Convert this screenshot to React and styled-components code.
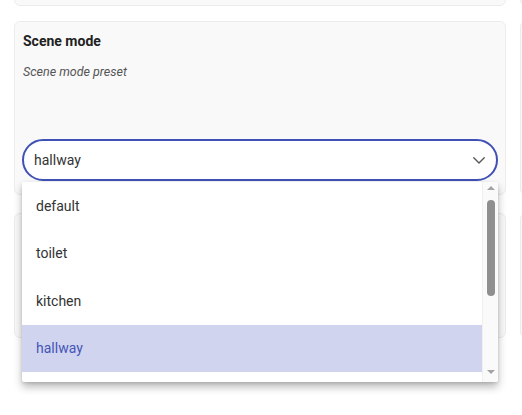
import React, { useState } from 'react';
import styled, { createGlobalStyle } from 'styled-components';

const GlobalStyle = createGlobalStyle`
  html, body {
    margin: 0;
    padding: 0;
    background: #ffffff;
    overflow: hidden;
  }
  body {
    font-family: Roboto, 'Liberation Sans', Arial, sans-serif;
  }
`;

const Viewport = styled.div`
  width: 522px;
  height: 415px;
  overflow: hidden;
`;

const Page = styled.div`
  display: grid;
  grid-template-columns: 492px 492px;
  column-gap: 14px;
  padding-left: 14px;
  margin-top: -30px;
`;

const Column = styled.div`
  display: flex;
  flex-direction: column;
`;

const Card = styled.div`
  box-sizing: border-box;
  height: ${props => props.h}px;
  margin-bottom: ${props => props.gap || 0}px;
  background: #f9f9f9;
  border: 1px solid #ececec;
  border-radius: 6px;
  padding: 9px 8px 0 8px;
  position: relative;
`;

const Title = styled.h3`
  margin: 0;
  font-size: 14px;
  line-height: 20px;
  font-weight: 700;
  color: #222;
`;

const Subtitle = styled.div`
  margin: 13px 0 0 0;
  font-size: 12.5px;
  line-height: 16px;
  font-style: italic;
  color: #555;
`;

const SelectWrap = styled.div`
  position: relative;
  margin-top: 59px;
`;

const SelectBox = styled.div`
  box-sizing: border-box;
  height: 42px;
  width: 476px;
  margin-left: -1px;
  border: 2px solid #3f51b5;
  border-radius: 21px;
  background: #fff;
  display: flex;
  align-items: center;
  justify-content: space-between;
  padding: 0 8px 0 10px;
  font-size: 14px;
  color: #333;
  cursor: pointer;
`;

const Menu = styled.div`
  position: absolute;
  top: 43px;
  left: -1px;
  width: 476px;
  height: 200px;
  background: #fff;
  box-shadow: 0 5px 9px rgba(0, 0, 0, 0.28), 0 1px 3px rgba(0, 0, 0, 0.12);
  border-radius: 2px;
  display: flex;
  overflow: hidden;
  z-index: 10;
`;

const List = styled.ul`
  list-style: none;
  margin: 0;
  padding: 0;
  flex: 1;
`;

const Item = styled.li`
  height: 47.5px;
  display: flex;
  align-items: center;
  padding-left: 14px;
  font-size: 14px;
  color: ${props => (props.selected ? '#4555b8' : '#333')};
  background: ${props => (props.selected ? '#d0d4ee' : '#fff')};
`;

const Scrollbar = styled.div`
  width: 15px;
  background: #fafafa;
  border-left: 1px solid #f0f0f0;
  display: flex;
  flex-direction: column;
  align-items: center;
`;

const Arrow = styled.div`
  width: 0;
  height: 0;
  margin: ${props => (props.down ? 'auto 0 8px' : '4px 0 0')};
  border-left: 4px solid transparent;
  border-right: 4px solid transparent;
  ${props =>
    props.down ? 'border-top: 4px solid #a3a3a3;' : 'border-bottom: 4px solid #a3a3a3;'}
`;

const Thumb = styled.div`
  width: 8px;
  height: 96px;
  margin-top: 10px;
  border-radius: 4px;
  background: #8f8f8f;
`;

const options = ['default', 'toilet', 'kitchen', 'hallway'];

const Chevron = () => (
  <svg width="18" height="18" viewBox="0 0 24 24" fill="none" stroke="#555" strokeWidth="1.8" strokeLinecap="round" strokeLinejoin="round">
    <path d="M5 9l7 7 7-7" />
  </svg>
);

const App = () => {
  const [value, setValue] = useState('hallway');
  return (
    <Viewport>
      <GlobalStyle />
      <Page>
        <Column>
          <Card h={36} gap={15} />
          <Card h={174} gap={18}>
            <Title>Scene mode</Title>
            <Subtitle>Scene mode preset</Subtitle>
            <SelectWrap>
              <SelectBox>
                <span>{value}</span>
                <Chevron />
              </SelectBox>
              <Menu>
                <List>
                  {options.map(o => (
                    <Item key={o} selected={o === value} onClick={() => setValue(o)}>
                      {o}
                    </Item>
                  ))}
                </List>
                <Scrollbar>
                  <Arrow />
                  <Thumb />
                  <Arrow down />
                </Scrollbar>
              </Menu>
            </SelectWrap>
          </Card>
          <Card h={125} />
        </Column>
        <Column>
          <Card h={36} gap={15} />
          <Card h={174} gap={18} />
          <Card h={125} />
        </Column>
      </Page>
    </Viewport>
  );
};

export default App;
